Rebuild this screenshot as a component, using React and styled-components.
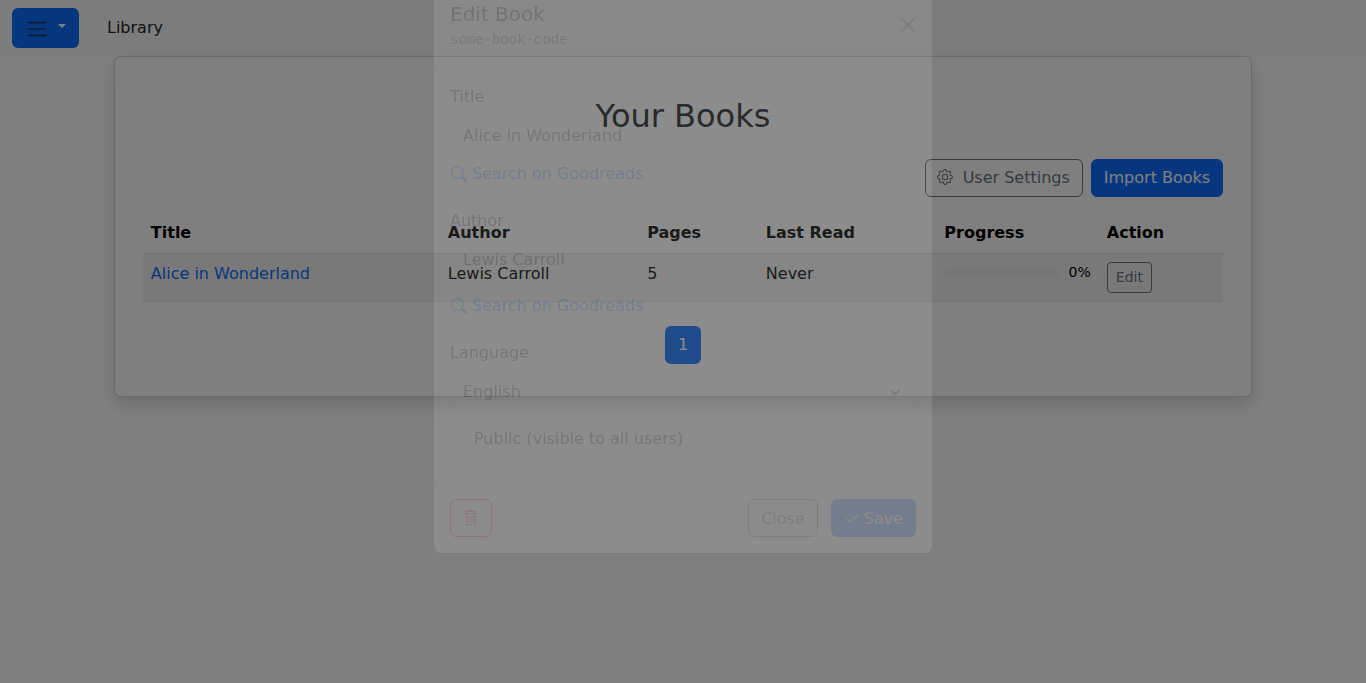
import React from "react";
import styled, { createGlobalStyle, css } from "styled-components";

const Global = createGlobalStyle`
  *, *::before, *::after { box-sizing: border-box; }
  body {
    margin: 0; height: 683px; overflow: hidden; background: #fff; color: #212529;
    font: 400 16px/24px "DejaVu Sans", sans-serif;
  }
`;

const Navbar = styled.nav`
  display: flex; align-items: center; gap: 28px;
  height: 56px; padding: 0 12px; background: #f8f9fa;
`;
const MenuButton = styled.button`
  display: flex; align-items: center; width: 67px; height: 40px; padding: 0 12px 0 13px;
  border: 0; border-radius: 6px; background: #0d6efd; color: #fff;
`;
const MenuLines = styled.svg`
  width: 24px; height: 24px; margin-top: 2px; color: #212529;
`;
const Caret = styled.span`
  margin: -5px 0 0 8.5px; border-top: 4.8px solid #fff;
  border-left: 4.8px solid transparent; border-right: 4.8px solid transparent;
`;
const Brand = styled.span`
  margin-top: -1px;
`;
const Card = styled.main`
  width: 1138.33px; height: 341px; margin: 0 auto; padding: 40px 28px 0;
  border: 1px solid rgba(0, 0, 0, 0.176); border-radius: 6px; background: #fff;
  box-shadow: 0 8px 16px rgba(0, 0, 0, 0.15); position: relative;
`;
const Heading = styled.h1`
  margin: 0 0 23px; font-size: 32px; line-height: 39px; font-weight: 400; text-align: center;
`;
const Actions = styled.div`
  display: flex; justify-content: flex-end; gap: 8px; margin-bottom: 16px;
`;

const tones = {
  primary: css`border-color: #0d6efd; background: #0d6efd; color: #fff;`,
  secondary: css`border-color: #6c757d; color: #6c757d;`,
  danger: css`border-color: #dc3545; color: #dc3545;`,
};
const Button = styled.button`
  display: inline-flex; align-items: center; flex: none; white-space: nowrap;
  height: 38px; padding: 0 12px; border: 1px solid; border-radius: 6px;
  background: transparent; font: inherit;
  ${(p) => tones[p.$tone]}
  ${(p) => p.$small && css`height: 31px; padding: 0 8px; border-radius: 4px; font-size: 14px; line-height: 21px;`}
`;

const Icon = styled.svg`
  width: 16px; height: 16px; flex: none; fill: currentColor;
  margin: ${(p) => p.$margin || 0};
`;

const Table = styled.table`
  width: 1080px; table-layout: fixed; border-collapse: separate; border-spacing: 0; margin: 0 0 24px;
`;
const Head = styled.th`
  height: 41px; padding: 8px; text-align: left; color: #000; font-weight: 700;
  width: ${(p) => p.$width}px; border-bottom: 1px solid #dee2e6;
`;
const Cell = styled.td`
  height: 48px; padding: 8px; vertical-align: top; color: #000;
  background: #f2f2f2; border-bottom: 1px solid #dee2e6;
`;
const BookLink = styled.a`
  color: #0d6efd;
`;
const Progress = styled.div`
  display: flex; align-items: center; gap: 8px; height: 21px; font-size: 14px; line-height: 21px;
`;
const Track = styled.div`
  flex: 1; height: 10px; border-radius: 6px; background: #e9ecef;
`;
const Pagination = styled.div`
  display: flex; justify-content: center;
`;
const Page = styled.a`
  width: 36px; height: 38px; border-radius: 6px; background: #0d6efd; color: #fff;
  text-align: center; line-height: 38px;
`;

const Backdrop = styled.div`
  position: fixed; inset: 0; background: #000; opacity: 0.5;
`;
const ModalLayer = styled.div`
  position: fixed; inset: 0; display: flex; justify-content: center; align-items: flex-start;
  opacity: 0.1;
`;
const Dialog = styled.section`
  width: 500px; margin-top: -18px; border: 1px solid rgba(0, 0, 0, 0.176);
  border-radius: 8px; background: #fff; background-clip: padding-box;
`;
const DialogHeader = styled.header`
  display: flex; justify-content: space-between; align-items: center;
  height: 85px; padding: 0 16px; border-bottom: 1px solid #dee2e6;
`;
const DialogTitle = styled.h5`
  margin: -1px 0 1px; font-size: 20px; line-height: 30px; font-weight: 400;
`;
const Code = styled.div`
  font: 14px/21px "Liberation Mono", monospace; color: rgba(33, 37, 41, 0.75);
`;
const DialogBody = styled.div`
  padding: 16px 16px 32px;
`;
const Field = styled.div`
  margin-bottom: ${(p) => p.$after}px;
`;
const Label = styled.label`
  display: block; padding-top: 1px; margin-bottom: 7px;
`;
const Control = styled.div`
  display: flex; align-items: center; justify-content: space-between;
  height: 38px; padding: 2px 12px 0; border: 1px solid #dee2e6; border-radius: 6px;
`;
const SearchLink = styled.a`
  display: flex; align-items: center; margin-top: ${(p) => p.$offset}px; color: #0d6efd;
`;
const CheckRow = styled.label`
  display: flex; align-items: center; gap: 8px; height: 24px; padding-top: 2px;
`;
const Check = styled.span`
  width: 16px; height: 16px; margin-top: -2px; border: 1px solid #dee2e6; border-radius: 4px;
`;
const DialogFooter = styled.footer`
  display: flex; gap: 13px; padding: 16px; border-top: 1px solid #dee2e6;
`;
const FooterButton = styled(Button)`
  padding-top: 2px;
`;
const Spacer = styled.span`
  flex: 1;
`;

const SearchIcon = () => (
  <Icon $margin="0 5px 0 1px" viewBox="0 0 16 16">
    <path d="M11.742 10.344a6.5 6.5 0 1 0-1.397 1.398h-.001q.044.06.098.115l3.85 3.85a1 1 0 0 0 1.415-1.414l-3.85-3.85a1 1 0 0 0-.115-.1zM12 6.5a5.5 5.5 0 1 1-11 0 5.5 5.5 0 0 1 11 0" />
  </Icon>
);
const GearIcon = () => (
  <Icon $margin="-2px 9.5px 0 -0.5px" viewBox="0 0 16 16">
    <path d="M8 4.754a3.246 3.246 0 1 0 0 6.492 3.246 3.246 0 0 0 0-6.492M5.754 8a2.246 2.246 0 1 1 4.492 0 2.246 2.246 0 0 1-4.492 0" />
    <path d="M9.796 1.343c-.527-1.79-3.065-1.79-3.592 0l-.094.319a.873.873 0 0 1-1.255.52l-.292-.16c-1.64-.892-3.433.902-2.54 2.541l.159.292a.873.873 0 0 1-.52 1.255l-.319.094c-1.79.527-1.79 3.065 0 3.592l.319.094a.873.873 0 0 1 .52 1.255l-.16.292c-.892 1.64.901 3.434 2.541 2.54l.292-.159a.873.873 0 0 1 1.255.52l.094.319c.527 1.79 3.065 1.79 3.592 0l.094-.319a.873.873 0 0 1 1.255-.52l.292.16c1.64.893 3.434-.902 2.54-2.541l-.159-.292a.873.873 0 0 1 .52-1.255l.319-.094c1.79-.527 1.79-3.065 0-3.592l-.319-.094a.873.873 0 0 1-.52-1.255l.16-.292c.893-1.64-.902-3.433-2.541-2.54l-.292.159a.873.873 0 0 1-1.255-.52zm-2.633.283c.246-.835 1.428-.835 1.674 0l.094.319a1.873 1.873 0 0 0 2.693 1.115l.291-.16c.764-.415 1.6.42 1.184 1.185l-.159.292a1.873 1.873 0 0 0 1.116 2.692l.318.094c.835.246.835 1.428 0 1.674l-.319.094a1.873 1.873 0 0 0-1.115 2.693l.16.291c.415.764-.42 1.6-1.185 1.184l-.291-.159a1.873 1.873 0 0 0-2.693 1.116l-.094.318c-.246.835-1.428.835-1.674 0l-.094-.319a1.873 1.873 0 0 0-2.692-1.115l-.292.16c-.764.415-1.6-.42-1.184-1.185l.159-.291A1.873 1.873 0 0 0 1.945 8.93l-.319-.094c-.835-.246-.835-1.428 0-1.674l.319-.094A1.873 1.873 0 0 0 3.06 4.377l-.16-.292c-.415-.764.42-1.6 1.185-1.184l.292.159a1.873 1.873 0 0 0 2.692-1.115z" />
  </Icon>
);
const TrashIcon = () => (
  <Icon $margin="-2px 0 0" viewBox="0 0 16 16">
    <path d="M5.5 5.5A.5.5 0 0 1 6 6v6a.5.5 0 0 1-1 0V6a.5.5 0 0 1 .5-.5m2.5 0a.5.5 0 0 1 .5.5v6a.5.5 0 0 1-1 0V6a.5.5 0 0 1 .5-.5m3 .5a.5.5 0 0 0-1 0v6a.5.5 0 0 0 1 0z" />
    <path d="M14.5 3a1 1 0 0 1-1 1H13v9a2 2 0 0 1-2 2H5a2 2 0 0 1-2-2V4h-.5a1 1 0 0 1-1-1V2a1 1 0 0 1 1-1H6a1 1 0 0 1 1-1h2a1 1 0 0 1 1 1h3.5a1 1 0 0 1 1 1zM4.118 4 4 4.059V13a1 1 0 0 0 1 1h6a1 1 0 0 0 1-1V4.059L11.882 4zM2.5 3h11V2h-11z" />
  </Icon>
);
const CheckIcon = () => (
  <Icon $margin="0 4px 0 0" viewBox="0 0 16 16" stroke="currentColor" strokeWidth="0.4">
    <path d="M13.854 3.646a.5.5 0 0 1 0 .708l-7 7a.5.5 0 0 1-.708 0l-3.5-3.5a.5.5 0 1 1 .708-.708L6.5 10.293l6.646-6.647a.5.5 0 0 1 .708 0" />
  </Icon>
);
const CloseIcon = styled.svg`
  width: 16px; height: 16px; margin: 0 0 0 auto; opacity: 0.5;
`;
const Chevron = styled.svg`
  width: 16px; height: 12px; margin-top: -1px;
`;

const columns = [["Title", 297], ["Author", 199.4], ["Pages", 118.6], ["Last Read", 178.5], ["Progress", 162.5], ["Action", 124]];

export default function App() {
  return (
    <>
      <Global />
      <Navbar>
        <MenuButton>
          <MenuLines viewBox="0 0 30 30" fill="none" stroke="currentColor" strokeWidth="2" strokeLinecap="round" strokeOpacity="0.75">
            <path d="M4 7h22M4 15h22M4 23h22" />
          </MenuLines>
          <Caret />
        </MenuButton>
        <Brand>Library</Brand>
      </Navbar>
      <Card>
        <Heading>Your Books</Heading>
        <Actions>
          <Button $tone="secondary"><GearIcon />User Settings</Button>
          <Button $tone="primary">Import Books</Button>
        </Actions>
        <Table>
          <thead>
            <tr>{columns.map(([name, width]) => <Head key={name} $width={width}>{name}</Head>)}</tr>
          </thead>
          <tbody>
            <tr>
              <Cell><BookLink>Alice in Wonderland</BookLink></Cell>
              <Cell>Lewis Carroll</Cell>
              <Cell>5</Cell>
              <Cell>Never</Cell>
              <Cell><Progress><Track />0%</Progress></Cell>
              <Cell><Button $tone="secondary" $small>Edit</Button></Cell>
            </tr>
          </tbody>
        </Table>
        <Pagination><Page>1</Page></Pagination>
      </Card>
      <Backdrop />
      <ModalLayer>
        <Dialog>
          <DialogHeader>
            <div>
              <DialogTitle>Edit Book</DialogTitle>
              <Code>some-book-code</Code>
            </div>
            <CloseIcon viewBox="0 0 16 16">
              <path d="M.293.293a1 1 0 0 1 1.414 0L8 6.586 14.293.293a1 1 0 1 1 1.414 1.414L9.414 8l6.293 6.293a1 1 0 0 1-1.414 1.414L8 9.414l-6.293 6.293a1 1 0 0 1-1.414-1.414L6.586 8 .293 1.707a1 1 0 0 1 0-1.414" />
            </CloseIcon>
          </DialogHeader>
          <DialogBody>
            <Field $after={22}>
              <Label>Title</Label>
              <Control>Alice in Wonderland</Control>
              <SearchLink $offset={8}><SearchIcon />Search on Goodreads</SearchLink>
            </Field>
            <Field $after={22}>
              <Label>Author</Label>
              <Control>Lewis Carroll</Control>
              <SearchLink $offset={16}><SearchIcon />Search on Goodreads</SearchLink>
            </Field>
            <Field $after={16}>
              <Label>Language</Label>
              <Control>
                English
                <Chevron viewBox="0 0 16 16">
                  <path fill="none" stroke="#343a40" strokeLinecap="round" strokeLinejoin="round" strokeWidth="2" d="m2 5 6 6 6-6" />
                </Chevron>
              </Control>
            </Field>
            <CheckRow><Check />Public (visible to all users)</CheckRow>
          </DialogBody>
          <DialogFooter>
            <FooterButton $tone="danger"><TrashIcon /></FooterButton>
            <Spacer />
            <FooterButton $tone="secondary">Close</FooterButton>
            <FooterButton $tone="primary"><CheckIcon />Save</FooterButton>
          </DialogFooter>
        </Dialog>
      </ModalLayer>
    </>
  );
}
